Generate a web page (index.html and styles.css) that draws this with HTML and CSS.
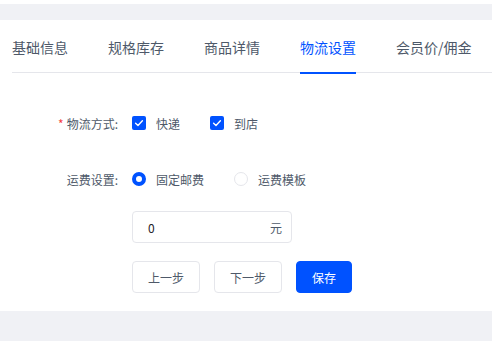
FILE: index.html
```html
<!DOCTYPE html>
<html lang="zh">
<head>
<meta charset="utf-8">
<link rel="stylesheet" href="styles.css">
</head>
<body>
<div class="topgap"></div>
<div class="card">
  <nav class="tabs">
    <div class="tab">基础信息</div>
    <div class="tab">规格库存</div>
    <div class="tab">商品详情</div>
    <div class="tab active">物流设置</div>
    <div class="tab">会员价/佣金</div>
  </nav>
  <div class="form">
    <div class="row">
      <div class="label"><span class="req">*</span>物流方式:</div>
      <div class="ctrl">
        <label class="opt"><span class="cb"><svg viewBox="0 0 14 14" width="14" height="14"><path d="M3.6 7.2 L6 9.4 L10.4 4.8" fill="none" stroke="#fff" stroke-width="1.4" stroke-linecap="round" stroke-linejoin="round"/></svg></span>快递</label>
        <label class="opt"><span class="cb"><svg viewBox="0 0 14 14" width="14" height="14"><path d="M3.6 7.2 L6 9.4 L10.4 4.8" fill="none" stroke="#fff" stroke-width="1.4" stroke-linecap="round" stroke-linejoin="round"/></svg></span>到店</label>
      </div>
    </div>
    <div class="row">
      <div class="label">运费设置:</div>
      <div class="ctrl">
        <label class="opt"><span class="radio on"></span>固定邮费</label>
        <label class="opt"><span class="radio"></span>运费模板</label>
      </div>
    </div>
    <div class="row">
      <div class="label"></div>
      <div class="ctrl">
        <div class="input"><span class="val">0</span><span class="unit">元</span></div>
      </div>
    </div>
    <div class="row btnrow">
      <div class="label"></div>
      <div class="ctrl btns">
        <button class="btn">上一步</button>
        <button class="btn">下一步</button>
        <button class="btn primary">保存</button>
      </div>
    </div>
  </div>
</div>
<div class="bottomgap"></div>
</body>
</html>
```
FILE: styles.css
```css
html, body {
  margin: 0;
  padding: 0;
  background: #fff;
  font-family: "Noto Sans CJK SC", "Noto Sans", sans-serif;
  overflow: hidden;
}
.topgap {
  margin-top: 4px;
  height: 16px;
  background: #f0f1f5;
}
.card {
  background: #fff;
  padding: 0 0 18px 12px;
}
.tabs {
  display: flex;
  gap: 40px;
  border-bottom: 1px solid #e5e6eb;
  height: 53px;
  box-sizing: border-box;
  padding-top: 16px;
}
.tab {
  position: relative;
  font-size: 14px;
  line-height: 22px;
  height: 22px;
  color: #4e5969;
  white-space: nowrap;
}
.tab.active {
  color: #0052ff;
}
.tab.active::after {
  content: "";
  position: absolute;
  left: 0;
  right: 0;
  bottom: -16px;
  height: 2px;
  background: #0052ff;
}
.form {
  padding-top: 34px;
  display: flex;
  flex-direction: column;
  gap: 24px;
}
.row {
  display: flex;
  align-items: center;
  height: 32px;
  gap: 12px;
}
.row:nth-child(3) {
  margin-top: -8px;
}
.row.btnrow {
  margin-top: -6px;
}
.label {
  width: 108px;
  text-align: right;
  font-size: 12px;
  color: #4e5969;
  white-space: nowrap;
  padding-right: 2px;
  box-sizing: border-box;
}
.req {
  color: #f53f3f;
  margin-right: 3px;
  font-size: 12px;
}
.ctrl {
  display: flex;
  align-items: center;
  gap: 30px;
}
.opt {
  display: flex;
  align-items: center;
  gap: 10px;
  font-size: 12px;
  color: #4e5969;
}
.cb {
  width: 14px;
  height: 14px;
  border-radius: 2px;
  background: #0052ff;
  display: flex;
}
.radio {
  width: 14px;
  height: 14px;
  border-radius: 50%;
  border: 1px solid #e5e6eb;
  box-sizing: border-box;
  background: #fff;
}
.radio.on {
  border: 4.5px solid #0052ff;
}
.input {
  width: 160px;
  height: 32px;
  box-sizing: border-box;
  border: 1px solid #e5e6eb;
  border-radius: 4px;
  display: flex;
  align-items: center;
  justify-content: space-between;
  padding: 0 9px 0 15px;
  font-size: 12px;
  color: #1d2129;
}
.unit {
  color: #4e5969;
}
.btns {
  gap: 14px;
}
.btn {
  height: 32px;
  padding: 0;
  width: 68px;
  border: 1px solid #e5e6eb;
  border-radius: 4px;
  background: #fff;
  color: #4e5969;
  font-family: "Noto Sans CJK SC", "Noto Sans", sans-serif;
  font-size: 12px;
}
.btn.primary {
  width: 56px;
  background: #0052ff;
  border-color: #0052ff;
  color: #fff;
}
.bottomgap {
  height: 40px;
  background: #f0f1f5;
}
```
